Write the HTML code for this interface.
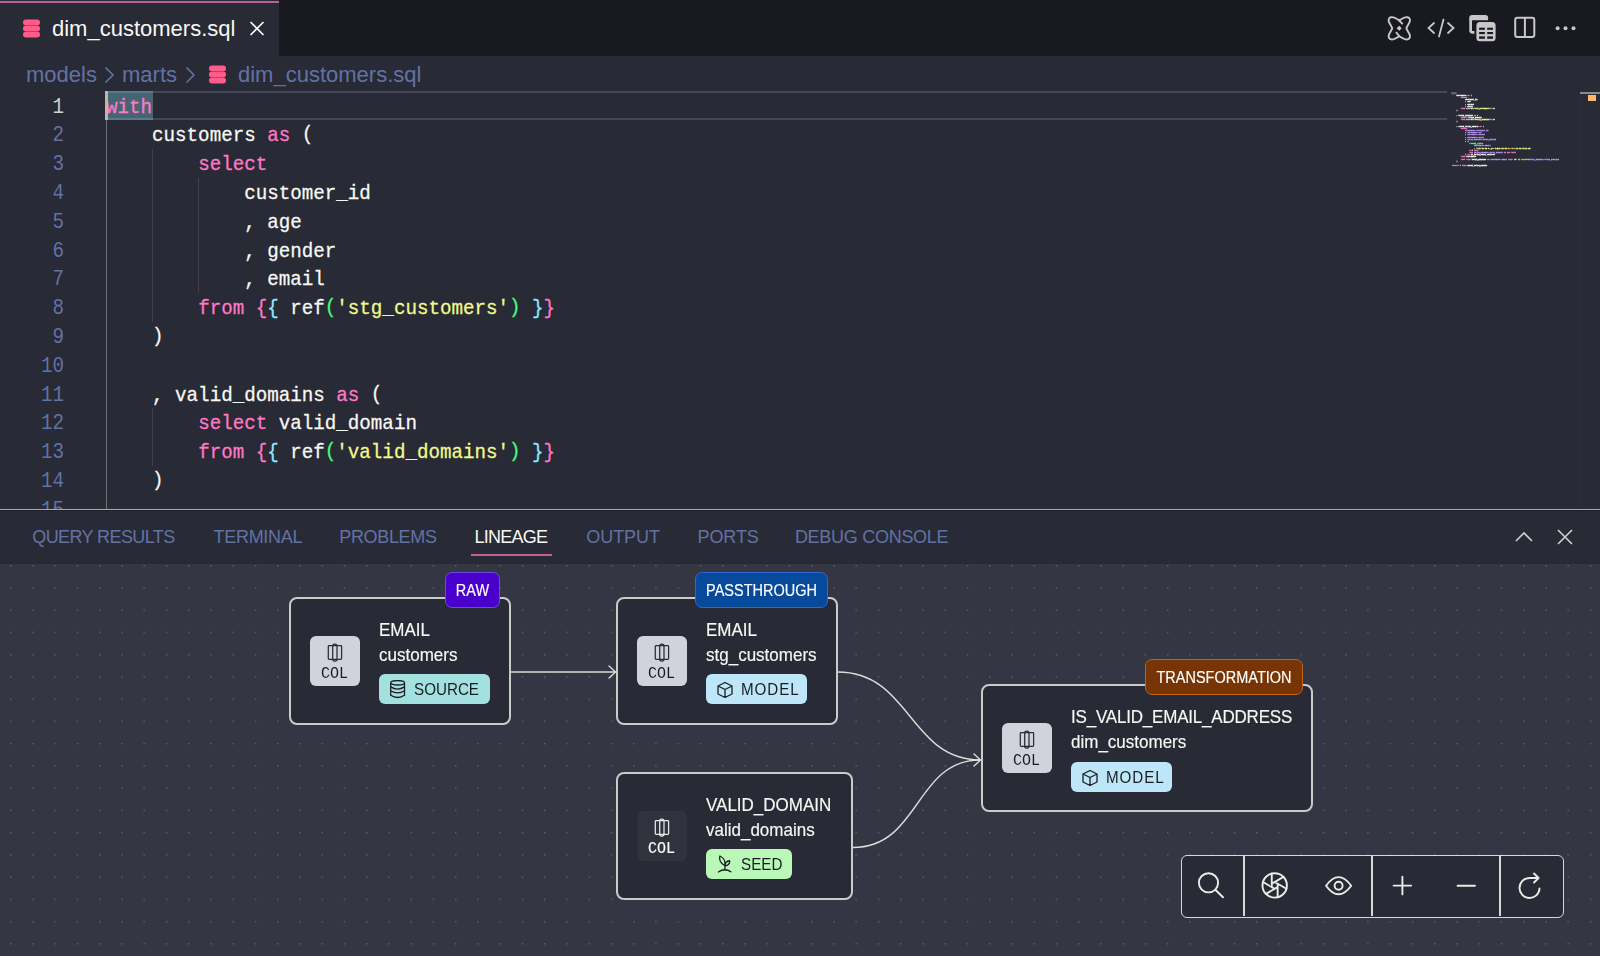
<!DOCTYPE html><html><head><meta charset="utf-8"><style>
*{margin:0;padding:0;box-sizing:border-box}
html,body{width:1600px;height:956px;overflow:hidden;background:#282A36;font-family:"Liberation Sans",sans-serif}
.a{position:absolute}
.ln{position:absolute;left:0;width:64px;transform-origin:0 19.5px;transform:scaleY(1.15);text-align:right;font-family:"Liberation Mono",monospace;font-size:19.2px;color:#6272A4;height:28.8px;line-height:28.8px}
.code{position:absolute;left:106px;-webkit-text-stroke:0.25px currentColor;transform-origin:0 19.5px;transform:scaleY(1.08);font-family:"Liberation Mono",monospace;font-size:19.2px;color:#F8F8F2;white-space:pre;height:28.8px;line-height:28.8px}
.k{color:#FF79C6}.s{color:#F1FA8C}.g{color:#50FA7B}.c{color:#8BE9FD}
.ptab{position:absolute;top:527px;font-size:18px;color:#6272A4;white-space:nowrap;line-height:20px}
.node{position:absolute;background:#282A36;border:2px solid #cbcbc9;border-radius:8px}
.badge{position:absolute;height:36px;border-radius:7px;color:#fff;font-size:14.5px;-webkit-text-stroke:0.15px #fff;line-height:33px;text-align:center;border:1.5px solid;white-space:nowrap}
.badge span{display:inline-block;transform-origin:50% 21.5px;transform:translateY(2px) scaleY(1.14)}
.lbl span{display:inline-block;transform-origin:0 16px;transform:scaleY(1.08);-webkit-text-stroke:0.15px #F8F8F2}
.colbox{position:absolute;width:50px;height:50px;border-radius:6px;background:#d0d2dc}
.coltxt{position:absolute;left:0;width:50px;top:30.5px;text-align:center;font-family:"Liberation Mono",monospace;font-size:15px;line-height:18px;color:#1b1c22;transform-origin:0 14px;transform:scaleY(1.1)}
.lbl{position:absolute;font-size:17px;color:#F8F8F2;white-space:nowrap;line-height:20px}
.pill{position:absolute;height:30px;border-radius:6px;color:#1b1c22;font-size:15.2px;white-space:nowrap;line-height:30px}
.pill svg{position:absolute;top:7px}
.pill span{position:absolute;top:0.5px;transform-origin:0 20px;transform:scaleY(1.1)}
.mm{position:absolute;left:0;font-family:"Liberation Mono",monospace;font-size:20px;line-height:24px;white-space:pre;color:#F8F8F2;font-weight:bold;-webkit-text-stroke:3px currentColor}
</style></head><body>
<div class="a" style="left:0;top:0;width:1600px;height:56px;background:#191A21"></div>
<div class="a" style="left:0;top:0;width:279px;height:56px;background:#282A36"></div>
<div class="a" style="left:0;top:1px;width:279px;height:2px;background:#b8609a"></div>
<svg class="a" style="left:23px;top:19px" width="17" height="19" viewBox="0 0 17 19"><g fill="#FF5C8A">
<rect x="0" y="0.5" width="17" height="6" rx="3"/><rect x="0" y="6.8" width="17" height="5.4" rx="2.2"/><rect x="0" y="12.5" width="17" height="6" rx="3"/></g></svg>
<div class="a" style="left:52px;top:16px;font-size:22px;line-height:26px;color:#F8F8F2;white-space:nowrap">dim_customers.sql</div>
<svg class="a" style="left:249px;top:21px" width="16" height="15" viewBox="0 0 16 15"><path d="M1.5 1L14.5 14M14.5 1L1.5 14" stroke="#F8F8F2" stroke-width="1.7"/></svg>
<svg class="a" style="left:1384px;top:12px" width="32" height="32" viewBox="0 0 32 32" fill="none" stroke="#c8c8c8" stroke-width="1.9" stroke-linejoin="round" stroke-linecap="round">
<path d="M15.3 8.4 C18.5 6.3 21 4.9 23.4 5.2 C25.4 5.5 26.2 7.2 25.9 9 C25.5 11.5 23 14 22.4 16.3 C23 18.6 25.5 21.1 25.9 23.6 C26.2 25.4 25.4 27.1 23.4 27.4 C21 27.7 18.5 26.3 15.3 24.2 C12.1 26.3 9.6 27.7 7.2 27.4 C5.2 27.1 4.4 25.4 4.7 23.6 C5.1 21.1 7.6 18.6 8.2 16.3 C7.6 14 5.1 11.5 4.7 9 C4.4 7.2 5.2 5.5 7.2 5.2 C9.6 4.9 12.1 6.3 15.3 8.4 Z"/>
<path d="M15.3 8.6 L18.2 11.6"/><path d="M15.2 24 L12.4 20.7"/>
<rect x="13.4" y="14.4" width="3.6" height="3.6" transform="rotate(45 15.2 16.2)" fill="#c8c8c8" stroke="none"/></svg>
<svg class="a" style="left:1426px;top:18px" width="30" height="20" viewBox="0 0 30 20" fill="none" stroke="#c8c8c8" stroke-width="1.8" stroke-linecap="round">
<path d="M8 5 L2.5 10 L8 15"/><path d="M22 5 L27.5 10 L22 15"/><path d="M17.5 1.5 L13 18.5"/></svg>
<svg class="a" style="left:1464px;top:10px" width="36" height="36" viewBox="0 0 36 36">
<path d="M5.3 10.2 V7.7 Q5.3 4.9 8.1 4.9 H21.3 Q24.1 4.9 24.1 7.7 V10.2 Z" fill="#c8c8c8"/>
<path d="M6.65 9 V20.6 Q6.65 22.4 8.5 22.4 H10.4" fill="none" stroke="#c8c8c8" stroke-width="2.7"/>
<rect x="12.4" y="12" width="19.2" height="19.2" rx="3.5" fill="#c8c8c8"/>
<g fill="#191A21"><rect x="15.1" y="17.7" width="5.8" height="2.1"/><rect x="23.2" y="17.7" width="5.8" height="2.1"/><rect x="15.1" y="22" width="5.8" height="2.1"/><rect x="23.2" y="22" width="5.8" height="2.1"/><rect x="15.1" y="26.4" width="5.8" height="2.4"/><rect x="23.2" y="26.4" width="5.8" height="2.4"/></g>
</svg>
<svg class="a" style="left:1513px;top:16px" width="24" height="23" viewBox="0 0 24 23" fill="none" stroke="#c8c8c8" stroke-width="2">
<rect x="2.2" y="1.7" width="19.1" height="19.3" rx="2.2"/><path d="M11.9 1.7 V21"/></svg>
<svg class="a" style="left:1553px;top:24px" width="24" height="8" viewBox="0 0 24 8" fill="#c8c8c8"><circle cx="4.6" cy="4.3" r="2"/><circle cx="12.5" cy="4.3" r="2"/><circle cx="20.5" cy="4.3" r="2"/></svg>
<div class="a" style="left:26px;top:61.7px;font-size:22px;line-height:26px;color:#6272A4;white-space:nowrap">models</div>
<svg class="a" style="left:104px;top:66px" width="11" height="18" viewBox="0 0 11 18"><path d="M1.5 1.5 L9 9 L1.5 16.5" fill="none" stroke="#6272A4" stroke-width="1.6"/></svg>
<div class="a" style="left:122px;top:61.7px;font-size:22px;line-height:26px;color:#6272A4;white-space:nowrap">marts</div>
<svg class="a" style="left:185px;top:66px" width="11" height="18" viewBox="0 0 11 18"><path d="M1.5 1.5 L9 9 L1.5 16.5" fill="none" stroke="#6272A4" stroke-width="1.6"/></svg>
<svg class="a" style="left:209px;top:65px" width="17" height="19" viewBox="0 0 17 19"><g fill="#FF5C8A">
<rect x="0" y="0.5" width="17" height="6" rx="3"/><rect x="0" y="6.8" width="17" height="5.4" rx="2.2"/><rect x="0" y="12.5" width="17" height="6" rx="3"/></g></svg>
<div class="a" style="left:238px;top:61.7px;font-size:22px;line-height:26px;color:#6272A4;white-space:nowrap">dim_customers.sql</div>
<div class="a" style="left:0;top:0;width:1600px;height:509px;overflow:hidden">
<div class="a" style="left:106px;top:91.2px;width:1341px;height:29.2px;border-top:2.7px solid #44475A;border-bottom:2.7px solid #44475A"></div>
<div class="a" style="left:106px;top:91.2px;width:46.5px;height:29.2px;background:rgba(139,233,253,0.31)"></div>
<div class="a" style="left:105.6px;top:120.3px;width:1.5px;height:420px;background:#6f707a"></div>
<div class="a" style="left:152px;top:149.1px;width:1px;height:172.8px;background:#3f4150"></div>
<div class="a" style="left:198px;top:177.9px;width:1px;height:115.2px;background:#3f4150"></div>
<div class="a" style="left:152px;top:408.3px;width:1px;height:57.6px;background:#3f4150"></div>
<div class="ln" style="top:93.60px;color:#d2d2cc">1</div>
<div class="code" style="top:93.60px"><span class="k">with</span></div>
<div class="ln" style="top:122.40px;color:#6272A4">2</div>
<div class="code" style="top:122.40px">    customers <span class="k">as</span> <span style="position:relative;top:-1.5px">(</span></div>
<div class="ln" style="top:151.20px;color:#6272A4">3</div>
<div class="code" style="top:151.20px">        <span class="k">select</span></div>
<div class="ln" style="top:180.00px;color:#6272A4">4</div>
<div class="code" style="top:180.00px">            customer_id</div>
<div class="ln" style="top:208.80px;color:#6272A4">5</div>
<div class="code" style="top:208.80px">            , age</div>
<div class="ln" style="top:237.60px;color:#6272A4">6</div>
<div class="code" style="top:237.60px">            , gender</div>
<div class="ln" style="top:266.40px;color:#6272A4">7</div>
<div class="code" style="top:266.40px">            , email</div>
<div class="ln" style="top:295.20px;color:#6272A4">8</div>
<div class="code" style="top:295.20px">        <span class="k">from</span> <span class="k">{</span><span class="c">{</span> ref<span class="g" style="position:relative;top:-1.5px">(</span><span class="s">'stg_customers'</span><span class="g" style="position:relative;top:-1.5px">)</span> <span class="c">}</span><span class="k">}</span></div>
<div class="ln" style="top:324.00px;color:#6272A4">9</div>
<div class="code" style="top:324.00px">    <span style="position:relative;top:-1.5px">)</span></div>
<div class="ln" style="top:352.80px;color:#6272A4">10</div>
<div class="ln" style="top:381.60px;color:#6272A4">11</div>
<div class="code" style="top:381.60px">    , valid_domains <span class="k">as</span> <span style="position:relative;top:-1.5px">(</span></div>
<div class="ln" style="top:410.40px;color:#6272A4">12</div>
<div class="code" style="top:410.40px">        <span class="k">select</span> valid_domain</div>
<div class="ln" style="top:439.20px;color:#6272A4">13</div>
<div class="code" style="top:439.20px">        <span class="k">from</span> <span class="k">{</span><span class="c">{</span> ref<span class="g" style="position:relative;top:-1.5px">(</span><span class="s">'valid_domains'</span><span class="g" style="position:relative;top:-1.5px">)</span> <span class="c">}</span><span class="k">}</span></div>
<div class="ln" style="top:468.00px;color:#6272A4">14</div>
<div class="code" style="top:468.00px">    <span style="position:relative;top:-1.5px">)</span></div>
<div class="ln" style="top:496.80px;color:#6272A4">15</div>
<div class="a" style="left:105px;top:91.2px;width:3px;height:29.2px;background:#b8b8b2"></div>
</div>
<div class="a" style="left:1451.5px;top:91.5px;width:1000px;height:1000px;transform-origin:0 0;transform:scale(0.0917)">
<div class="mm" style="top:0px"><span class="k">with</span></div>
<div class="mm" style="top:24px">    customers <span class="k">as</span> (</div>
<div class="mm" style="top:48px">        <span class="k">select</span></div>
<div class="mm" style="top:72px">            customer_id</div>
<div class="mm" style="top:96px">            , age</div>
<div class="mm" style="top:120px">            , gender</div>
<div class="mm" style="top:144px">            , email</div>
<div class="mm" style="top:168px">        <span class="k">from</span> {{ ref(<span class="s">'stg_customers'</span>) }}</div>
<div class="mm" style="top:192px">    )</div>
<div class="mm" style="top:216px"></div>
<div class="mm" style="top:240px">    , valid_domains <span class="k">as</span> (</div>
<div class="mm" style="top:264px">        <span class="k">select</span> valid_domain</div>
<div class="mm" style="top:288px">        <span class="k">from</span> {{ ref(<span class="s">'valid_domains'</span>) }}</div>
<div class="mm" style="top:312px">    )</div>
<div class="mm" style="top:336px"></div>
<div class="mm" style="top:360px">    , check_valid_emails <span class="k">as</span> (</div>
<div class="mm" style="top:384px">        <span class="k">select</span></div>
<div class="mm" style="top:408px">            <span style="color:#BD93F9">customers.customer_id</span></div>
<div class="mm" style="top:432px">            , <span style="color:#BD93F9">customers.age</span></div>
<div class="mm" style="top:456px">            , <span style="color:#BD93F9">customers.gender</span></div>
<div class="mm" style="top:480px">            , <span style="color:#BD93F9">customers.email</span></div>
<div class="mm" style="top:504px">            , <span style="color:#BD93F9">valid_domains.valid_domain</span></div>
<div class="mm" style="top:528px">            , (</div>
<div class="mm" style="top:552px">                <span class="g">regexp_like</span>(</div>
<div class="mm" style="top:576px">                    <span style="color:#BD93F9">customers.email</span></div>
<div class="mm" style="top:600px">                    , <span class="s">'^[A-Za-z0-9._%+-]+@[A-Za-z0-9.-]+\.[A-Za-z]{2,}$'</span></div>
<div class="mm" style="top:624px">                ) = <span class="k">true</span></div>
<div class="mm" style="top:648px">                <span class="k">and</span> <span style="color:#BD93F9">valid_domains.valid_domain</span> <span class="k">is not null</span></div>
<div class="mm" style="top:672px">            ) <span class="k">as</span> is_valid_email_address</div>
<div class="mm" style="top:696px">        <span class="k">from</span> customers</div>
<div class="mm" style="top:720px">        <span class="k">left join</span> valid_domains <span class="k">on</span> <span style="color:#BD93F9">customers.email</span> <span class="k">like</span> <span class="s">'%'</span> || <span class="g">concat</span>(<span style="color:#BD93F9">valid_domains.valid_domain</span>)</div>
<div class="mm" style="top:744px">    )</div>
<div class="mm" style="top:768px"></div>
<div class="mm" style="top:792px"><span class="k">select</span> * <span class="k">from</span> check_valid_emails</div>
</div>
<div class="a" style="left:1580px;top:92px;width:1px;height:417px;background:#2c2e3a"></div>
<div class="a" style="left:1451px;top:91.5px;width:5px;height:2.6px;background:#5d5f6c"></div>
<div class="a" style="left:1580px;top:92px;width:20px;height:2px;background:#8a8a8a"></div>
<div class="a" style="left:1587.5px;top:94.5px;width:8px;height:6.5px;background:#FFB86C"></div>
<div class="a" style="left:0;top:509px;width:1600px;height:1px;background:#BD93F9"></div>
<div class="a" style="left:0;top:510px;width:1600px;height:1px;background:#1d1f26"></div>
<div class="ptab" style="left:32.25px;color:#6272A4;letter-spacing:-0.59px">QUERY RESULTS</div>
<div class="ptab" style="left:213.6px;color:#6272A4;letter-spacing:-0.31px">TERMINAL</div>
<div class="ptab" style="left:339.3px;color:#6272A4;letter-spacing:-0.34px">PROBLEMS</div>
<div class="ptab" style="left:474.5px;color:#F8F8F2;letter-spacing:-0.77px">LINEAGE</div>
<div class="ptab" style="left:586.3px;color:#6272A4;letter-spacing:-0.08px">OUTPUT</div>
<div class="ptab" style="left:697.5px;color:#6272A4;letter-spacing:-0.1px">PORTS</div>
<div class="ptab" style="left:794.9px;color:#6272A4;letter-spacing:-0.28px">DEBUG CONSOLE</div>
<div class="a" style="left:471px;top:554px;width:81px;height:2px;background:#c0619c"></div>
<svg class="a" style="left:1514px;top:530px" width="20" height="13" viewBox="0 0 20 13"><path d="M2 11 L10 3 L18 11" fill="none" stroke="#d0d0d0" stroke-width="1.6"/></svg>
<svg class="a" style="left:1557px;top:529px" width="16" height="16" viewBox="0 0 16 16"><path d="M1 1 L15 15 M15 1 L1 15" fill="none" stroke="#d0d0d0" stroke-width="1.6"/></svg>
<div class="a" style="left:0;top:564px;width:1600px;height:392px;background:#343644"></div>
<svg class="a" style="left:0;top:564px" width="1600" height="392"><defs><pattern id="dots" x="10" y="0.9" width="22.25" height="22.25" patternUnits="userSpaceOnUse"><rect x="0" y="0" width="1.4" height="1.4" fill="#60626f"/></pattern></defs><rect width="1600" height="392" fill="url(#dots)"/></svg>
<svg class="a" style="left:0;top:0" width="1600" height="956" viewBox="0 0 1600 956" fill="none" stroke="#dcdcd8" stroke-width="1.4" stroke-linecap="round" stroke-linejoin="round">
<path d="M511 672 H615"/><path d="M609 666 L615.5 672 L609 678"/>
<path d="M838 672 C 910 672, 910 760, 980 760"/>
<path d="M853 847.5 C 920 847.5, 915 760, 980 760"/>
<path d="M974 754 L980.5 760 L974 766"/>
</svg>
<div class="node" style="left:289px;top:597px;width:222px;height:128px"></div>
<div class="badge" style="left:445px;top:572px;width:55px;background:#4a00cc;border-color:#6a4ae0"><span>RAW</span></div>
<div class="colbox" style="left:309.5px;top:635.5px"><svg class="a" style="left:0;top:0" width="50" height="50" viewBox="0 0 50 50" fill="none" stroke="#2a2c36" stroke-width="1.25"><rect x="18.3" y="9.7" width="13.3" height="13.6" rx="0.8"/><rect x="22.7" y="8.1" width="4.3" height="16.9" rx="2"/></svg><div class="coltxt">COL</div></div>
<div class="lbl" style="left:379px;top:621px;letter-spacing:0px"><span>EMAIL</span></div>
<div class="lbl" style="left:379px;top:646px"><span>customers</span></div>
<div class="pill" style="left:379px;top:674px;width:111px;background:#a3e1e0"><svg style="left:11px;top:5.5px" width="16" height="19" viewBox="0 0 16 19" fill="none" stroke="#1b1c22" stroke-width="1.3"><ellipse cx="7.6" cy="2.8" rx="6.9" ry="2.2"/><path d="M0.7 2.8 V15.3 Q7.6 19.7 14.5 15.3 V2.8 M0.7 6.9 Q7.6 11.3 14.5 6.9 M0.7 10.7 Q7.6 15.1 14.5 10.7"/></svg><span style="left:35px;letter-spacing:0px">SOURCE</span></div>
<div class="node" style="left:616px;top:597px;width:222px;height:128px"></div>
<div class="badge" style="left:695px;top:572px;width:133px;background:#074a9c;border-color:#2a6ad0"><span>PASSTHROUGH</span></div>
<div class="colbox" style="left:636.5px;top:635.5px"><svg class="a" style="left:0;top:0" width="50" height="50" viewBox="0 0 50 50" fill="none" stroke="#2a2c36" stroke-width="1.25"><rect x="18.3" y="9.7" width="13.3" height="13.6" rx="0.8"/><rect x="22.7" y="8.1" width="4.3" height="16.9" rx="2"/></svg><div class="coltxt">COL</div></div>
<div class="lbl" style="left:706px;top:621px;letter-spacing:0px"><span>EMAIL</span></div>
<div class="lbl" style="left:706px;top:646px"><span>stg_customers</span></div>
<div class="pill" style="left:706px;top:674px;width:101px;background:#bde7f8"><svg style="left:10px" width="18" height="18" viewBox="0 0 18 18" fill="none" stroke="#1b1c22" stroke-width="1.3" stroke-linejoin="round"><path d="M9 1.5 L16 5 V13 L9 16.5 L2 13 V5 Z M2 5 L9 8.5 L16 5 M9 8.5 V16.5"/></svg><span style="left:35px;letter-spacing:0.9px">MODEL</span></div>
<div class="node" style="left:981px;top:684px;width:332px;height:128px"></div>
<div class="badge" style="left:1145px;top:659px;width:158px;background:#773505;border-color:#b86422"><span>TRANSFORMATION</span></div>
<div class="colbox" style="left:1001.5px;top:722.5px"><svg class="a" style="left:0;top:0" width="50" height="50" viewBox="0 0 50 50" fill="none" stroke="#2a2c36" stroke-width="1.25"><rect x="18.3" y="9.7" width="13.3" height="13.6" rx="0.8"/><rect x="22.7" y="8.1" width="4.3" height="16.9" rx="2"/></svg><div class="coltxt">COL</div></div>
<div class="lbl" style="left:1071px;top:708px;letter-spacing:-0.2px"><span>IS_VALID_EMAIL_ADDRESS</span></div>
<div class="lbl" style="left:1071px;top:733px"><span>dim_customers</span></div>
<div class="pill" style="left:1071px;top:762px;width:101px;background:#bde7f8"><svg style="left:10px" width="18" height="18" viewBox="0 0 18 18" fill="none" stroke="#1b1c22" stroke-width="1.3" stroke-linejoin="round"><path d="M9 1.5 L16 5 V13 L9 16.5 L2 13 V5 Z M2 5 L9 8.5 L16 5 M9 8.5 V16.5"/></svg><span style="left:35px;letter-spacing:0.9px">MODEL</span></div>
<div class="node" style="left:616px;top:772px;width:237px;height:128px"></div>
<div class="colbox" style="left:636.5px;top:810.5px;background:#30323e"><svg class="a" style="left:0;top:0" width="50" height="50" viewBox="0 0 50 50" fill="none" stroke="#e8e8e8" stroke-width="1.25"><rect x="18.3" y="9.7" width="13.3" height="13.6" rx="0.8"/><rect x="22.7" y="8.1" width="4.3" height="16.9" rx="2"/></svg><div class="coltxt" style="color:#F8F8F2;-webkit-text-stroke:0.2px #F8F8F2">COL</div></div>
<div class="lbl" style="left:706px;top:796px;letter-spacing:0px"><span>VALID_DOMAIN</span></div>
<div class="lbl" style="left:706px;top:821px"><span>valid_domains</span></div>
<div class="pill" style="left:706px;top:849.3px;width:86px;background:#b9f8b7"><svg style="left:10px;top:5px" width="18" height="20" viewBox="0 0 18 20" fill="none" stroke="#1b1c22" stroke-width="1.3" stroke-linecap="round" stroke-linejoin="round"><path d="M8.95 11.75 C4.2 9.5 2.6 4.8 3.95 2 C7.6 3.5 9.6 7.5 8.95 11.75 Z M8.95 11.75 C9 8.7 11 7 13.65 6.75 C14.1 9.5 12.1 11.5 8.95 11.75 Z M8.95 11.75 V16 M2.35 18 Q8.95 13.6 14.85 17.8"/></svg><span style="left:35px;letter-spacing:0px">SEED</span></div>
<div class="a" style="left:1180.5px;top:854.5px;width:383.5px;height:63px;background:#282A36;border:1.7px solid #d8d8d4;border-radius:6px"></div>
<div class="a" style="left:1243px;top:856px;width:1.6px;height:60px;background:#d8d8d4"></div>
<div class="a" style="left:1371px;top:856px;width:1.6px;height:60px;background:#d8d8d4"></div>
<div class="a" style="left:1499px;top:856px;width:1.6px;height:60px;background:#d8d8d4"></div>
<svg class="a" style="left:1180px;top:855px" width="384" height="62" viewBox="1180 855 384 62" fill="none" stroke="#ecece6" stroke-width="1.9" stroke-linecap="round" stroke-linejoin="round"><circle cx="1208.5" cy="882.8" r="9.6"/><path d="M1215.8 890.3 L1223 897.3"/><g transform="translate(1274.7 885.4)"><circle r="12.2"/><path d="M0.00 -3.40 L11.73 3.37 M2.94 -1.70 L2.94 11.84 M2.94 1.70 L-8.78 8.47 M0.00 3.40 L-11.73 -3.37 M-2.94 1.70 L-2.94 -11.84 M-2.94 -1.70 L8.78 -8.47"/></g><path d="M1326 885.7 Q1338.6 868.5 1351.2 885.7 Q1338.6 902.9 1326 885.7 Z"/><circle cx="1338.6" cy="885.7" r="4"/><path d="M1402.4 876.8 V894.4 M1393.6 885.6 H1411.2"/><path d="M1457.5 885.7 H1475"/><path d="M1539.5 888.5 A10 10 0 1 1 1529.4 878 H1538"/><path d="M1534 873.5 L1538.6 878 L1534 882.5"/></svg>
</body></html>
